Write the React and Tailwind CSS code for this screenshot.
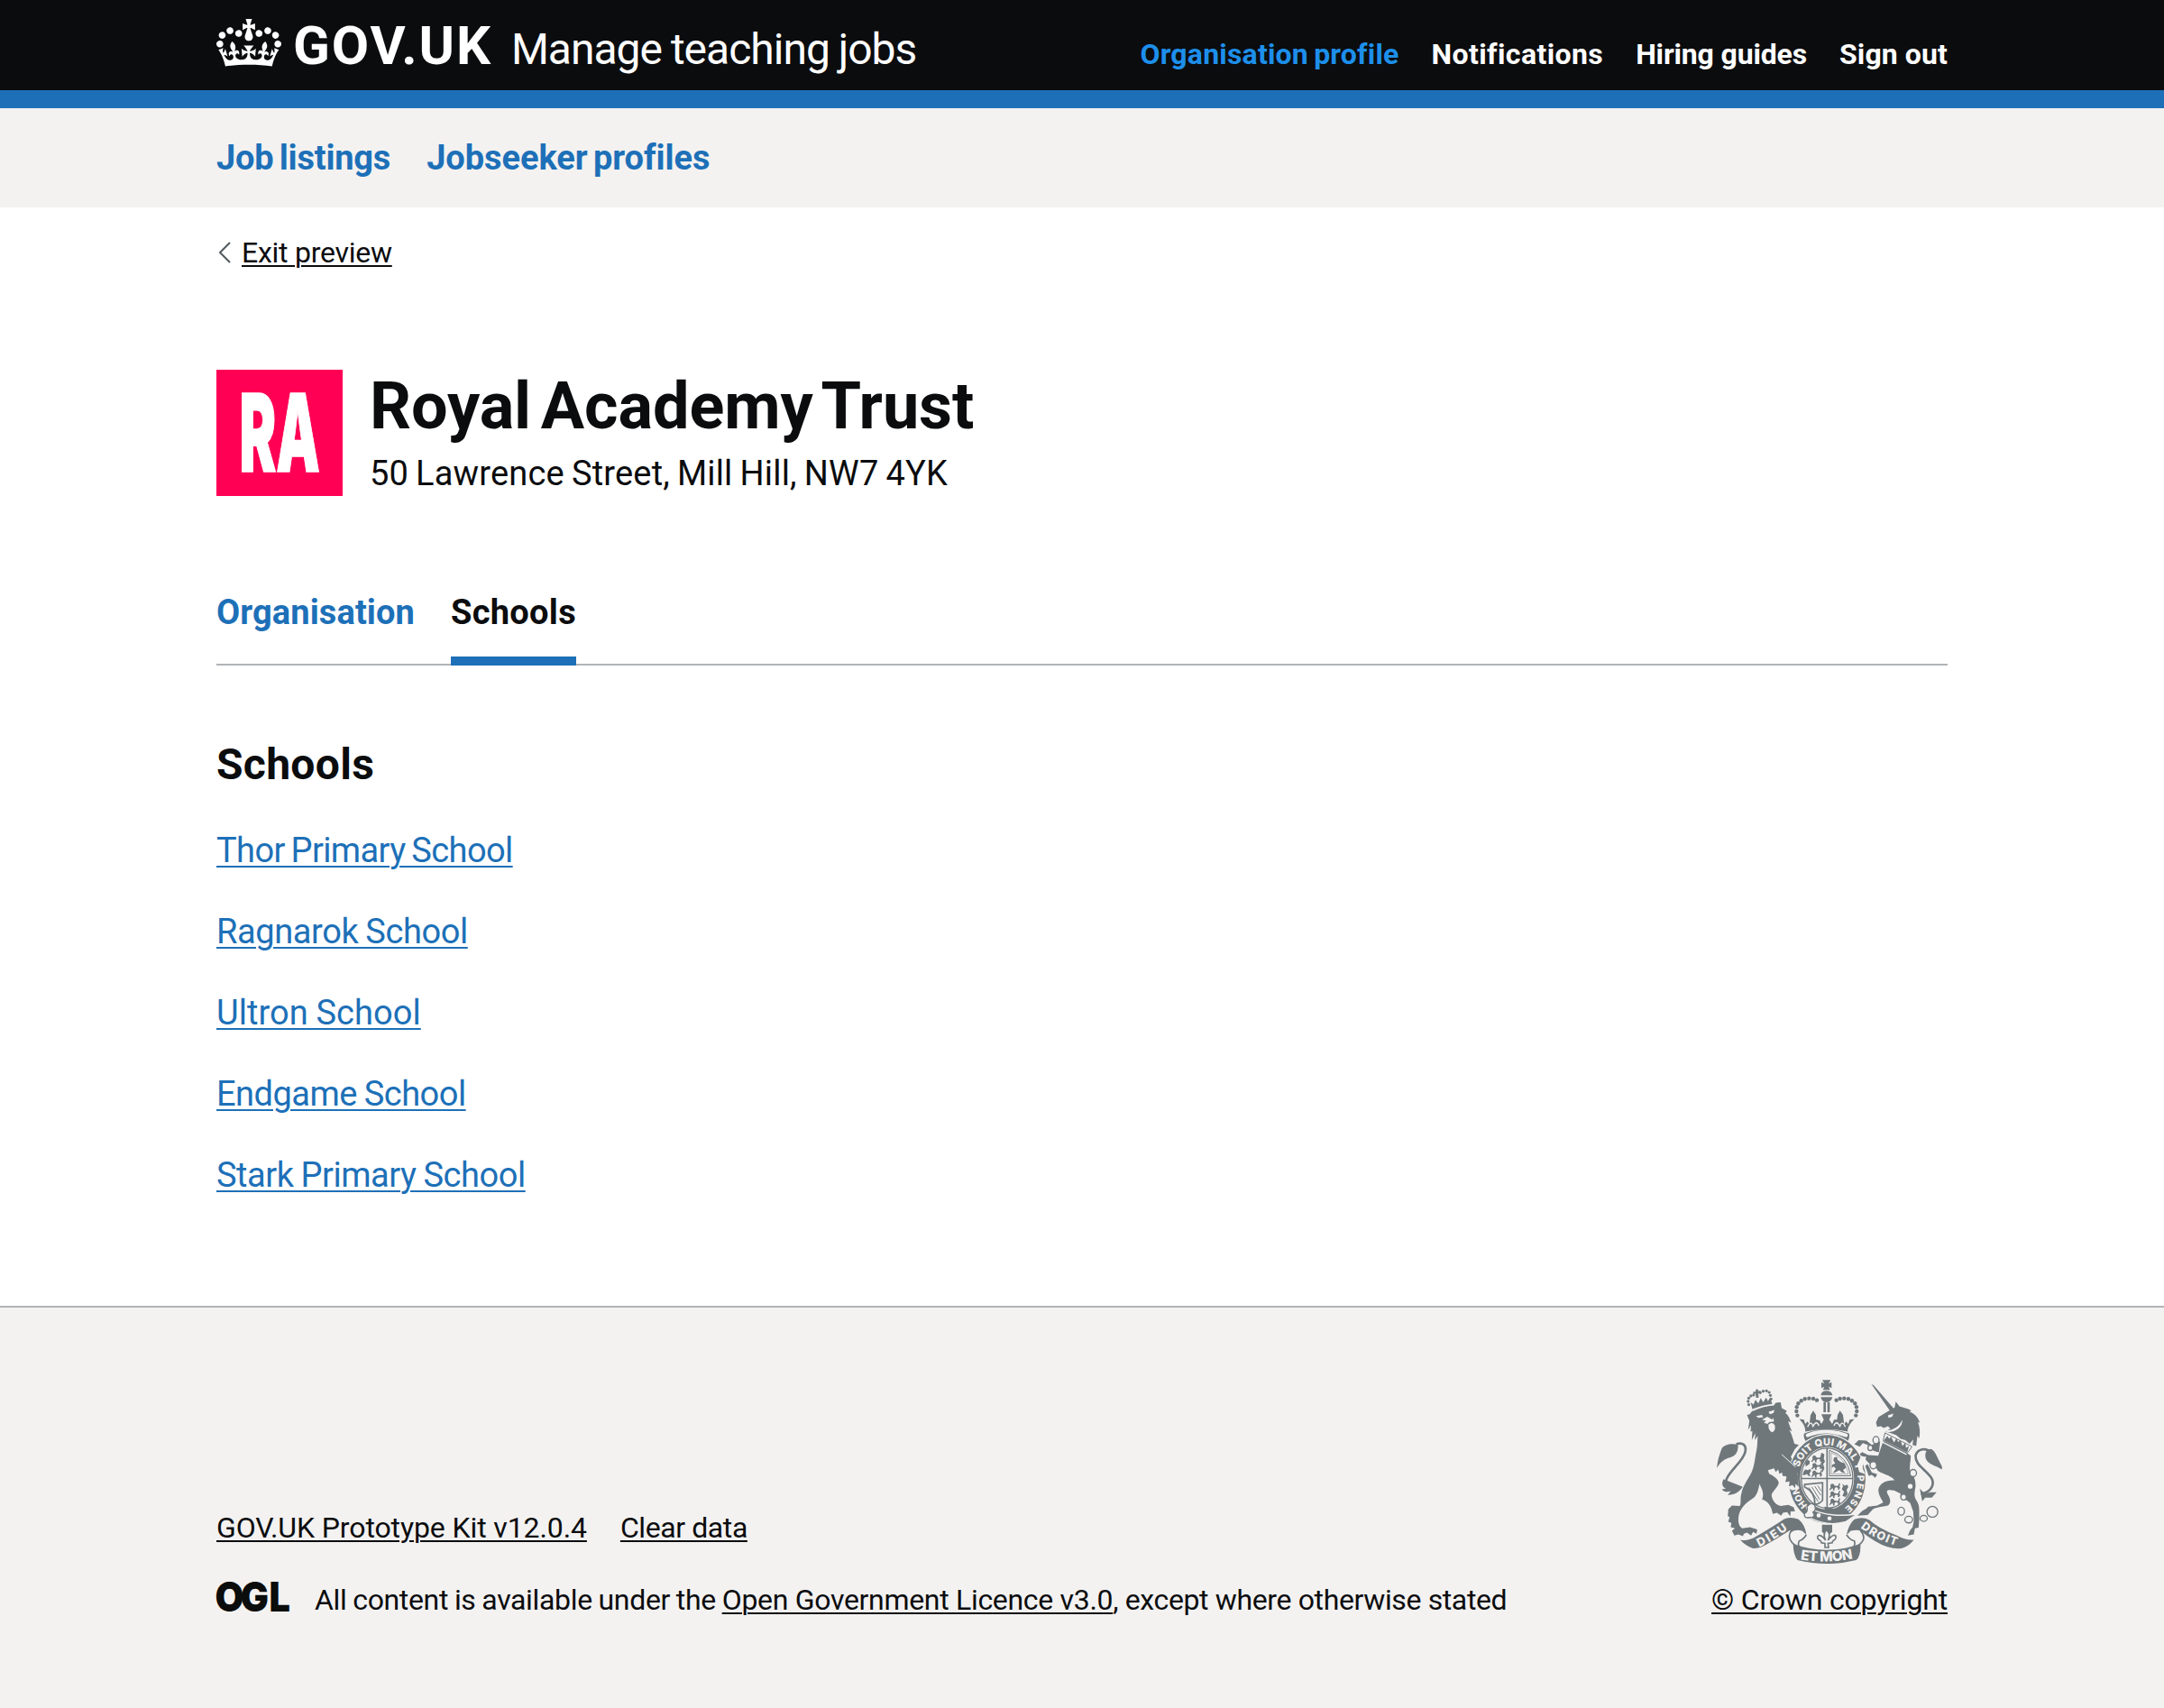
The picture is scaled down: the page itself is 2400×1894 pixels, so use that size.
const SCHOOLS = [
  { name: 'Thor Primary School', tracking: 'tracking-[-0.61px] [word-spacing:-2px]' },
  { name: 'Ragnarok School', tracking: 'tracking-[-0.41px] [word-spacing:-1px]' },
  { name: 'Ultron School', tracking: 'tracking-[0.07px] [word-spacing:-1px]' },
  { name: 'Endgame School', tracking: 'tracking-[-0.52px] [word-spacing:-1px]' },
  { name: 'Stark Primary School', tracking: 'tracking-[-0.46px] [word-spacing:-1px]' },
]

const NAV = [
  { name: 'Organisation profile', style: 'text-[#1d8feb] tracking-[0.2px] [word-spacing:-2px]' },
  { name: 'Notifications', style: 'text-white tracking-[0.4px]' },
  { name: 'Hiring guides', style: 'text-white tracking-[-0.15px]' },
  { name: 'Sign out', style: 'text-white tracking-[0.1px]' },
]

const UNDERLINE = 'underline decoration-2 underline-offset-[3px]'
const UNDERLINE_LARGE = 'underline decoration-2 underline-offset-4'

function Crown() {
  return (
    <svg className="mt-[21px] h-[53px] w-[72px] shrink-0" viewBox="0 0 132 97" aria-hidden="true">
      <path
        fill="white"
        fillRule="evenodd"
        d="M25 30.2c3.5 1.5 7.7-.2 9.1-3.7 1.5-3.6-.2-7.8-3.9-9.2-3.6-1.4-7.6.3-9.1 3.9-1.4 3.5.3 7.5 3.9 9zM9 39.5c3.6 1.5 7.8-.2 9.2-3.7 1.5-3.6-.2-7.8-3.9-9.1-3.6-1.5-7.6.2-9.1 3.8-1.4 3.5.3 7.5 3.8 9zM4.4 57.2c3.5 1.5 7.7-.2 9.1-3.8 1.5-3.6-.2-7.7-3.9-9.1-3.5-1.5-7.6.3-9.1 3.8-1.4 3.5.3 7.6 3.9 9.1zm38.3-21.4c3.5 1.5 7.7-.2 9.1-3.8 1.5-3.6-.2-7.7-3.9-9.1-3.6-1.5-7.6.3-9.1 3.8-1.3 3.6.4 7.7 3.9 9.1zm64.4-5.6c-3.6 1.5-7.8-.2-9.1-3.7-1.5-3.6.2-7.8 3.8-9.2 3.6-1.4 7.7.3 9.2 3.9 1.3 3.5-.4 7.5-3.9 9zm15.9 9.3c-3.6 1.5-7.7-.2-9.1-3.7-1.5-3.6.2-7.8 3.7-9.1 3.6-1.5 7.7.2 9.2 3.8 1.5 3.5-.3 7.5-3.8 9zm4.7 17.7c-3.6 1.5-7.8-.2-9.2-3.8-1.5-3.6.2-7.7 3.9-9.1 3.6-1.5 7.7.3 9.2 3.8 1.3 3.5-.4 7.6-3.9 9.1zM89.3 35.8c-3.6 1.5-7.8-.2-9.2-3.8-1.4-3.6.2-7.7 3.9-9.1 3.6-1.5 7.7.3 9.2 3.8 1.4 3.6-.3 7.7-3.9 9.1zM69.7 17.7l8.9 4.7V9.3l-8.9 2.8c-.2-.3-.5-.6-.9-.9L72.4 0H59.6l3.5 11.2c-.3.3-.6.5-.9.9l-8.8-2.8v13.1l8.8-4.7c.3.3.6.7.9.9l-5 15.4v.1c-.2.8-.4 1.6-.4 2.4 0 4.1 3.1 7.5 7 8.1h.2c.3 0 .7.1 1 .1.4 0 .7 0 1-.1h.2c4-.6 7.1-4.1 7.1-8.1 0-.8-.1-1.7-.4-2.4V34l-5.1-15.4c.4-.2.7-.6 1-.9zM66 92.8c16.9 0 32.8 1.1 47.1 3.2 4-16.9 8.9-26.7 14-33.5l-9.6-3.4c1 4.9 1.1 7.2 0 10.2-1.5-1.4-3-4.3-4.2-8.7L108.6 76c2.8-2 5-3.2 7.5-3.3-4.4 9.4-10 11.9-13.6 11.2-4.3-.8-6.3-4.6-5.6-7.9 1-4.7 5.7-5.9 8-.5 4.3-8.7-3-11.4-7.6-8.8 7.1-7.2 7.9-13.5 2.1-21.1-8 6.1-8.1 12.3-4.5 20.8-4.7-5.4-12.1-2.5-9.5 6.2 3.4-5.2 7.9-2 7.2 3.1-.6 4.3-6.4 7.8-13.5 7.2-10.3-.9-10.9-8-11.2-13.8 2.5-.5 7.1 1.8 11 7.3L80.2 60c-4.1 4.4-8 5.3-12.3 5.4 1.4-4.4 8-11.6 8-11.6H55.5s6.4 7.2 7.9 11.6c-4.2-.1-8-1-12.3-5.4l1.4 16.4c3.9-5.5 8.5-7.7 10.9-7.3-.3 5.8-.9 12.8-11.1 13.8-7.2.6-12.9-2.9-13.5-7.2-.7-5 3.8-8.3 7.1-3.1 2.7-8.7-4.6-11.6-9.4-6.2 3.7-8.5 3.6-14.7-4.6-20.8-5.8 7.6-5 13.9 2.2 21.1-4.7-2.6-11.9.1-7.7 8.8 2.3-5.5 7.1-4.2 8.1.5.7 3.3-1.3 7.1-5.7 7.9-3.5.7-9-1.8-13.5-11.2 2.5.1 4.7 1.3 7.5 3.3l-4.7-15.4c-1.2 4.4-2.7 7.2-4.3 8.7-1.1-3-.9-5.3 0-10.2l-9.5 3.4c5 6.9 9.9 16.7 14 33.5 14.8-2.1 30.8-3.2 47.7-3.2z"
      />
    </svg>
  )
}

function TrustLogo() {
  return (
    <svg className="size-[140px] shrink-0 overflow-visible bg-[#ff0055]" viewBox="0 0 140 140">
      <text x="25.5" y="113" textLength="89.5" lengthAdjust="spacingAndGlyphs" fontSize="119" strokeWidth="1.5" className="fill-white stroke-white font-['Inter'] font-black">
        RA
      </text>
    </svg>
  )
}

function OglLogo() {
  return (
    <svg className="h-[34px] w-[82px] shrink-0 overflow-visible" viewBox="0 0 82 34" aria-label="Open Government Licence">
      <text transform="scale(0.92 1)" x="-1.5 29 63.5" y="33" fontSize="45" className="fill-[#0b0c0c] font-['Inter'] font-black">
        OGL
      </text>
    </svg>
  )
}

const CROWN_BEADS = [
  [340, 208], [337, 194], [338, 180], [343, 168], [353, 159], [365, 153], [379, 151], [393, 152], [405, 157],
]

const LION_CROWN_BEADS = [
  [178, 172], [176, 161], [178, 150], [185, 143], [194, 140], [216, 132], [226, 127], [237, 126], [246, 131], [250, 141], [252, 153],
]

/* Three small walking lions, stacked in a shield quarter. */
function Lions({ x, y }) {
  return [0, 25, 50].map((dy) => (
    <path
      key={dy}
      transform={'translate(' + x + ' ' + (y + dy) + ')'}
      d="M2 6l5-5 6 2 3 5 10 1 3-3 2-7 4 3-3 8 3 5-4 6h-5l2-5-4-3-6 1-3 6 2 4h-6l-1-8-5 3-4 4-3-2 5-7z"
    />
  ))
}

function RoyalArms() {
  return (
    <svg className="h-[204px] w-[250px] overflow-visible" viewBox="72 89 750 613" aria-hidden="true">
      <defs>
        <path id="garterTop" d="M345 381A100 112 0 0 1 536 392" />
        <path id="garterRight" d="M540 408A101 118 0 0 1 493 520" />
        <path id="garterLeft" d="M374 507A99 116 0 0 1 341 430" />
        <path id="ribbonLeft" d="M213 646Q266 622 318 580" />
        <path id="ribbonRight" d="M550 582Q600 622 676 644" />
        <path id="ribbonMid" d="M350 688Q440 702 526 685" />
      </defs>

      <g fill="#6f777b">
        {/* lion: tail */}
        <path d="M148 452C112 458 96 444 104 420C114 392 158 362 166 330C172 306 156 296 136 304" fill="none" stroke="#6f777b" strokeWidth="8" />
        <path d="M72 383C74 352 84 330 88 318C98 304 122 300 142 306C144 326 136 342 116 348C98 352 82 364 72 383Z" />
        <path d="M94 420C86 434 90 446 102 452L88 454C96 464 108 464 118 460L108 473C130 474 148 462 158 446Z" />
        {/* lion: crown */}
        <path d="M190 187L184 164L194 172L200 156L210 168L218 150L226 164L236 148L242 160L250 148L256 170Q220 174 190 187Z" />
        {LION_CROWN_BEADS.map(([x, y]) => (
          <circle key={x + ',' + y} cx={x} cy={y} r="4.8" />
        ))}
        <path d="M201 121h9l-1 6 8-2v9l-7-1 1 15-8 2-3-15-7 3v-9l8 0z" />
        {/* lion: body */}
        <path d="M172 206L181 204L192 190Q224 176 262 174L268 166L284 164L288 184L305 193L300 200C312 208 314 220 320 232L309 227C314 242 318 252 323 262L313 256C322 272 326 288 330 302L345 306L332 320L318 346L336 372C348 392 346 408 348 430L350 446L338 438L336 450L328 440L316 446L314 430L300 430L304 414L290 408L294 396L280 402L276 388L268 396L262 384L242 390L246 402C262 410 276 420 278 432C274 450 254 462 254 474C256 492 268 506 284 510L310 506L328 514L332 528L318 528L316 544L306 530L292 532L286 542L272 532L258 536L254 520C246 500 236 492 222 488C228 476 226 460 218 446L214 436C208 464 204 476 190 486C168 498 146 522 144 546C142 566 146 578 156 584L182 580L206 588L204 602L192 596L186 608L172 598L162 602L158 610L144 604L130 608L122 592L132 584L118 580L120 566L110 562L114 546L108 544L110 520L122 508L148 510C154 496 148 484 154 466C160 440 176 420 186 400C198 376 198 350 204 324C208 304 206 290 208 276L198 290L200 266L188 290L190 260L184 262L186 240L176 256L180 226Z" />
        {/* unicorn: horn, head, body */}
        <path d="M587 104L594 107L662 186L648 192Z" />
        <path d="M664 182L668 162L680 178L708 186L720 192L714 196C734 204 742 216 748 232L742 230C748 248 750 264 746 284L740 276L736 310L724 306L726 288L714 302L700 290L684 286L670 274L650 266L634 262L650 252L642 244L628 250L618 244L606 246L602 232L610 214L632 200L650 190Z" />
        <path d="M626 294L640 296L704 332L718 342C718 360 712 378 716 396C730 410 734 424 734 444C730 466 728 476 736 490C744 502 746 510 746 528L746 556L744 582L732 584L728 604L708 608L716 590L724 580L728 560L726 528L716 500L704 490C690 490 680 484 684 468L662 458C640 454 634 456 642 472C652 488 652 500 642 508C622 512 602 514 592 520L574 540L540 542L556 526L570 518L576 512L606 508L626 498C622 488 610 474 610 456C612 434 638 422 664 424C650 404 620 404 606 390L606 352L612 334Z" />
        {/* unicorn: forelegs */}
        <path d="M608 388C590 376 572 364 566 352L554 342L546 350L550 364L538 380L526 372L536 346L556 330L576 340L610 342Z" />
        <path d="M612 330C594 328 584 322 574 306L558 300L548 312L530 304L544 290L570 292L588 306Q600 300 616 294Z" />
        <path d="M566 376L574 370L588 398L606 404L600 416L588 406L578 410Z" />
        {/* unicorn: tail */}
        <path d="M752 470C790 462 800 434 784 412C764 386 732 372 734 342C740 318 770 314 784 332" fill="none" stroke="#6f777b" strokeWidth="8" />
        <path d="M822 388C800 374 776 372 768 352C764 336 768 322 784 320C800 324 806 350 822 378Z" />
        <path d="M748 452L764 468L784 464L804 464L788 482L766 482L756 494Z" />
        {/* royal crown */}
        <path d="M423 90H451L444 102L454 97V117L444 112L449 123H425L430 112L420 117V97L430 102Z" />
        <path d="M418 141Q420 126 437 126Q454 126 457 141Z" />
        <path d="M418 147h39q-4 16-20 17q-16-1-19-17z" />
        <path d="M427 163h8v34h-8zM440 163h8v34h-8z" />
        {CROWN_BEADS.map(([x, y]) => (
          <g key={x + ',' + y}>
            <circle cx={x} cy={y} r="6.6" />
            <circle cx={875 - x} cy={y} r="6.6" />
          </g>
        ))}
        <path d="M366 262C368 248 358 232 346 220L362 222L366 236L374 228L380 238L382 222L384 206L393 192L402 206L402 222L414 224L420 236L428 222L420 204H454L446 222L456 236L462 222L472 222L474 206L482 192L492 206L494 222L496 238L502 228L510 236L514 222L530 220C518 232 506 248 508 262Q437 246 366 262Z" />
        <path d="M363 268Q437 240 512 268Q516 280 508 294Q437 260 368 294Q358 280 363 268Z" />
        {/* pendant */}
        <path d="M422 572h34v24l-10 8h-14l-10-8z" />
        <path d="M437 588C424 602 430 616 434 624C420 602 404 604 408 618C412 626 420 622 420 632L432 634L432 648H444L442 634L456 632C456 622 466 626 468 616C470 602 456 604 442 624C448 610 450 602 437 588Z" fill="#f3f2f1" stroke="#6f777b" strokeWidth="5" />
      </g>

      <path d="M374 274Q437 250 502 274" fill="none" stroke="#f3f2f1" strokeWidth="12" strokeLinecap="round" />
      <g fill="none" stroke="#f3f2f1" strokeWidth="4">
        <path d="M374 246Q386 222 392 244Q404 222 412 242M462 242Q470 222 482 244Q488 222 500 246" />
      </g>

      {/* lion: face and crown band */}
      <g fill="#f3f2f1">
        <path d="M190 192Q224 176 262 172" fill="none" stroke="#f3f2f1" strokeWidth="4" />
        <path d="M202 210L222 206L226 214L210 216ZM244 196L264 190L260 200L248 204ZM222 222L240 212L256 222L260 216L262 228L246 230L240 236L228 232L236 226Z" />
        <path d="M244 238Q256 228 264 240Q270 258 256 264Q242 260 244 238Z" />
        {/* unicorn: eye, jaw */}
        <path d="M642 208L660 202L656 212L644 216ZM690 222C690 246 672 262 640 264L634 258C662 258 680 244 690 222Z" />
      </g>
      {/* unicorn: collar */}
      <path d="M632 266L722 312L706 334L626 292Z" fill="#f3f2f1" stroke="#6f777b" strokeWidth="3" />
      <path d="M628 291L640 276L646 286L652 278L662 298L670 284L676 296L684 290L690 310L700 298L702 316L712 310L706 332Z" fill="#6f777b" />
      <path d="M622 296L704 338" stroke="#f3f2f1" strokeWidth="4" />

      {/* garter */}
      <ellipse cx="439" cy="420" rx="131" ry="151" fill="#f3f2f1" />
      <ellipse cx="439" cy="420" rx="128" ry="147" fill="#6f777b" />
      <ellipse cx="439" cy="417" rx="90" ry="104" fill="#f3f2f1" />
      <ellipse cx="439" cy="417" rx="86" ry="100" fill="none" stroke="#6f777b" strokeWidth="4" />
      <path d="M300 350L316 366L340 400L346 452L320 456L296 440Z" fill="#f3f2f1" />
      <path d="M284 338L312 352L334 384Q344 400 344 446L334 436L332 450L324 440L312 444L314 428L300 430L304 412L290 406Z" fill="#6f777b" />
      <path d="M288 338L334 380" stroke="#f3f2f1" strokeWidth="3" />
      <path d="M552 344L570 346L556 380L566 404L546 396L540 372Z" fill="#f3f2f1" />

      {/* shield quarters */}
      <g fill="none" stroke="#6f777b" strokeWidth="3">
        <path d="M439 316V516M353 418H525" strokeWidth="5" />
        <path d="M447 324V409H518Q508 344 447 324Z" />
        <path d="M453 332V403H510Q500 350 453 332Z" strokeWidth="1.6" />
        <path d="M364 438L424 432V490Q414 504 398 504Q400 464 364 446Z" strokeWidth="5" />
        <path d="M378 448L410 496M388 446L414 488M398 444L418 474M408 442L420 460" />
      </g>
      <g fill="#6f777b">
        <Lions x={388} y={340} />
        <Lions x={448} y={434} />
        <path d="M360 396l6-8 10 2 6-4 4 6-6 10 4 8-8-1-4-6-8 4-6 0zM366 364l8-8 8 4-2 10-12 8z" />
        <path d="M420 332l10 6-2 14 4 10-6 8 4 14-6 14-4-16 2-14-6-12zM490 436l8 6 8-4 4 8-6 10 4 14-8 10-10-4 6-14-8-8 4-10z" />
        <path d="M462 348l10-2 2 10 12 8 12 4 4 14-10 8 8 10-12-2-8-8-14 8-8 2 10-14-6-8-8 4 2-10 10-4-6-10z" />
      </g>

      {/* belt */}
      <path d="M370 512Q440 552 540 536L502 562Q440 580 380 548Z" fill="#6f777b" stroke="#f3f2f1" strokeWidth="4" />
      <path d="M430 512L460 518L456 528L432 524Z" fill="#6f777b" />
      <g fill="#f3f2f1">
        <circle cx="411" cy="541" r="7" />
        <circle cx="447" cy="551" r="7" />
      </g>
      <path d="M372 512Q386 494 398 508Q404 524 392 530Q404 548 380 548Q360 552 364 534Q376 530 372 512Z" fill="#f3f2f1" stroke="#6f777b" strokeWidth="4" />

      {/* unicorn: chain */}
      <g fill="#f3f2f1" stroke="#6f777b" strokeWidth="4">
        <ellipse cx="602" cy="290" rx="10" ry="12" />
        <ellipse cx="583" cy="316" rx="8" ry="9" />
        <ellipse cx="593" cy="374" rx="11" ry="12" />
        <ellipse cx="726" cy="400" rx="11" ry="12" />
        <ellipse cx="716" cy="444" rx="10" ry="10" />
        <ellipse cx="694" cy="480" rx="9" ry="10" />
        <ellipse cx="686" cy="527" rx="11" ry="13" />
        <ellipse cx="711" cy="555" rx="13" ry="11" />
        <ellipse cx="761" cy="551" rx="12" ry="10" />
        <circle cx="790" cy="529" r="18" />
      </g>

      {/* ribbon */}
      <g fill="#6f777b">
        <path d="M149 622Q176 628 204 610Q262 576 296 553Q320 544 344 554Q366 572 370 606L356 592Q330 586 318 598L316 590Q270 620 240 636Q212 654 190 650Q168 642 149 622Z" />
        <path d="M728 622Q700 624 672 608Q610 584 580 556Q556 544 530 554Q510 572 504 606L518 592Q540 588 550 592Q600 632 640 646Q676 656 696 648Q714 640 728 622Z" />
        <path d="M326 636Q436 676 550 636Q552 678 536 690Q440 714 340 690Q326 672 326 636Z" />
      </g>
      <g fill="none" stroke="#6f777b" strokeWidth="5">
        <path d="M370 606Q360 622 346 626Q340 640 348 646M318 594Q310 608 316 622Q326 642 350 648" />
        <path d="M504 606Q516 624 530 626Q534 640 526 646M550 592Q564 606 560 622Q550 642 526 648" />
      </g>
      <g className="font-['Inter'] font-extrabold" fill="#f3f2f1">
        <text fontSize="33"><textPath href="#garterTop" textLength="266" lengthAdjust="spacing">SOIT QUI MAL Y</textPath></text>
        <text fontSize="31"><textPath href="#garterRight" textLength="122" lengthAdjust="spacing">PENSE</textPath></text>
        <text fontSize="31"><textPath href="#garterLeft">HON</textPath></text>
        <text fontSize="39"><textPath href="#ribbonLeft" textLength="112">DIEU</textPath></text>
        <text fontSize="38"><textPath href="#ribbonRight" textLength="134">DROIT</textPath></text>
        <text fontSize="46"><textPath href="#ribbonMid" textLength="176">ET MON</textPath></text>
      </g>
    </svg>
  )
}

export default function App() {
  return (
    <div className="min-h-[1894px] bg-white font-['Roboto','Liberation_Sans',sans-serif] whitespace-nowrap text-[#0b0c0e]">
      <header className="h-[120px] border-b-20 border-[#1d70b8] bg-[#0b0c0e] text-white">
        <div className="mx-auto flex w-[1920px] items-start">
          <Crown />
          <span className="mt-[21px] ml-[13px] text-[60px] leading-[60px] font-bold tracking-[1.9px]">GOV.UK</span>
          <span className="mt-[25px] ml-[21px] text-5xl leading-[60px] tracking-[-1px] [word-spacing:-1px]">Manage teaching jobs</span>
          <nav className="mt-10 ml-auto flex gap-9 text-[32px] leading-10 font-bold">
            {NAV.map((item) => (
              <a key={item.name} className={item.style}>{item.name}</a>
            ))}
          </nav>
        </div>
      </header>

      <div className="h-[110px] bg-[#f3f2f1] pt-[30px]">
        <nav className="mx-auto flex w-[1920px] gap-10 text-[38px] leading-[50px] font-bold text-[#1d70b8]">
          <a className="tracking-[-0.2px] [word-spacing:-3px]">Job listings</a>
          <a className="tracking-[-0.06px] [word-spacing:-3px]">Jobseeker profiles</a>
        </nav>
      </div>

      <main className="mx-auto h-[1218px] w-[1920px] pt-[30px]">
        <a className="flex h-10 items-center text-[32px] leading-10">
          <svg className="ml-[2px] h-6 w-[14px]" viewBox="0 0 14 24" fill="none" stroke="#505a5f" strokeWidth="2">
            <path d="M13 1L2 12L13 23" />
          </svg>
          <span className={'ml-3 tracking-[-0.26px] ' + UNDERLINE}>Exit preview</span>
        </a>

        <div className="mt-[110px] flex h-[140px] gap-[30px]">
          <TrustLogo />
          <div className="pt-[3px]">
            <h1 className="text-7xl leading-[75px] font-bold tracking-[-0.1px] [word-spacing:-7px]">Royal Academy Trust</h1>
            <p className="mt-3 text-[38px] leading-[50px] tracking-[0.18px] [word-spacing:-1.6px]">50 Lawrence Street, Mill Hill, NW7 4YK</p>
          </div>
        </div>

        <nav className="mt-[104px] flex h-[84px] gap-10 text-[38px] leading-[50px] font-bold shadow-[inset_0_-2px_0_#b1b4b6]">
          <a className="tracking-[0.11px] text-[#1d70b8]">Organisation</a>
          <a className="border-b-10 border-[#1d70b8] tracking-[0.29px]">Schools</a>
        </nav>

        <h2 className="mt-20 text-5xl leading-[60px] font-bold tracking-[0.3px]">Schools</h2>
        <ul className="mt-10 flex flex-col gap-10 text-[38px] leading-[50px] text-[#1d70b8]">
          {SCHOOLS.map((school) => (
            <li key={school.name}>
              <a className={school.tracking + ' ' + UNDERLINE_LARGE}>{school.name}</a>
            </li>
          ))}
        </ul>
      </main>

      <footer className="h-[446px] border-t-2 border-[#b1b4b6] bg-[#f3f2f1] pt-20 text-[32px] leading-10">
        <div className="mx-auto flex h-[264px] w-[1920px] items-end justify-between">
          <div>
            <div className="flex gap-[37px]">
              <a className={'tracking-[-0.11px] ' + UNDERLINE}>GOV.UK Prototype Kit v12.0.4</a>
              <a className={'tracking-[-0.41px] ' + UNDERLINE}>Clear data</a>
            </div>
            <div className="mt-10 flex items-start">
              <OglLogo />
              <p className="ml-[27px]">
                <span className="tracking-[-0.34px] [word-spacing:-0.8px]">All content is available under the </span>
                <a className={'tracking-[-0.31px] ' + UNDERLINE}>Open Government Licence v3.0</a>
                <span className="tracking-[-0.37px]">, except where otherwise stated</span>
              </p>
            </div>
          </div>
          <div className="flex h-full flex-col items-end justify-between">
            <div className="pr-[6px]">
              <RoyalArms />
            </div>
            <a className={'tracking-[-0.18px] ' + UNDERLINE}>© Crown copyright</a>
          </div>
        </div>
      </footer>
    </div>
  )
}
